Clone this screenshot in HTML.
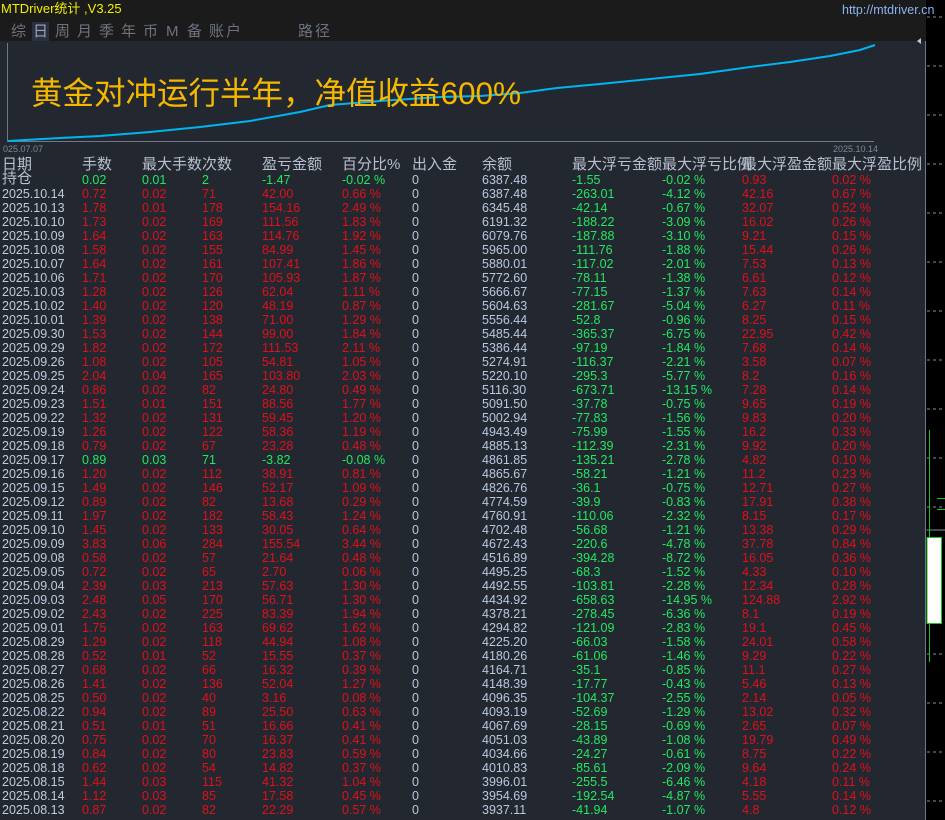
<!DOCTYPE html>
<html style="overflow:hidden;width:945px;height:820px"><head><meta charset="utf-8"><style>
*{margin:0;padding:0;box-sizing:border-box}
body{width:945px;height:820px;overflow:hidden;background:#000;font-family:"Liberation Sans","Noto Sans CJK SC",sans-serif;position:relative}
#top{position:absolute;left:0;top:0;width:926px;height:41px;background:#1b1b1b}
#title{position:absolute;left:1px;top:1px;color:#f0f000;font-size:13px;line-height:16px}
#url{position:absolute;left:842px;top:3px;color:#8ab4f0;font-size:12.5px}
#tabs{position:absolute;left:0;top:22px;color:#6c7380;font-size:15px;line-height:20px}
#tabs span{position:absolute;top:0;white-space:nowrap}
#tabs .on{background:#2a3040;color:#9aa4b8;padding:0 1px;margin-left:-1px}
#panel{position:absolute;left:0;top:41px;width:926px;height:779px;background:#232830;border-right:1px solid #6a7890}
#big{position:absolute;left:31px;top:75px;color:#f5b800;font-size:31.5px;line-height:36px;white-space:nowrap}
.lbl{position:absolute;color:#808896;font-size:9px}
#hdr{position:absolute;top:156px;left:0;color:#b8c0d0;font-size:15px;line-height:18px;white-space:nowrap}
.row{position:absolute;left:0;height:14px;font-size:12.5px;line-height:14px;white-space:nowrap;color:#e0101a}
.row span,#hdr span{position:absolute;top:0}
.c0{left:2px;color:#c0cbe0}.c1{left:82px}.c2{left:142px}.c3{left:202px}.c4{left:262px}.c5{left:342px}.c6{left:412px;color:#b8c8e0}.c7{left:482px;color:#b8c8e0}.c8{left:572px;color:#20e860}.c9{left:662px;color:#20e860}.c10{left:742px}.c11{left:832px}
.g .c1,.g .c2,.g .c3,.g .c4,.g .c5,.g .c10,.g .c11{color:#20e860}
#hdr span{color:#b8c0d0}
</style></head><body>
<div id="top"><div id="title">MTDriver统计 ,V3.25</div>
<div id="tabs"><span style="left:11px">综</span><span class="on" style="left:33px">日</span><span style="left:55px">周</span><span style="left:77px">月</span><span style="left:99px">季</span><span style="left:121px">年</span><span style="left:143px">币</span><span style="left:166px">M</span><span style="left:187px">备</span><span style="left:209px;letter-spacing:2px">账户</span><span style="left:298px;letter-spacing:2px">路径</span></div>
<div id="url">http://mtdriver.cn</div></div>
<div id="panel"></div>
<svg style="position:absolute;left:0;top:0" width="945" height="820">
<line x1="7.5" y1="43" x2="7.5" y2="142" stroke="#707888"/>
<line x1="7" y1="141.5" x2="874" y2="141.5" stroke="#707888"/>
<polyline fill="none" stroke="#00b4f0" stroke-width="2" points="8,141 60,138 100,136 150,132 200,127 250,121 300,112 330,105 380,101 440,97 480,96 520,93 557,88 600,84 660,78 700,74 750,67 790,62 830,56 860,50 875,45"/>
<polygon points="917,41 921,38 921,44" fill="#c0c8d0"/>
<g stroke="#8090a0" stroke-dasharray="3,3"><line x1="927" y1="17" x2="945" y2="17"/><line x1="927" y1="66" x2="945" y2="66"/><line x1="927" y1="115" x2="945" y2="115"/><line x1="927" y1="164" x2="945" y2="164"/><line x1="927" y1="213" x2="945" y2="213"/><line x1="927" y1="262" x2="945" y2="262"/><line x1="927" y1="311" x2="945" y2="311"/><line x1="927" y1="360" x2="945" y2="360"/><line x1="927" y1="409" x2="945" y2="409"/><line x1="927" y1="458" x2="945" y2="458"/><line x1="927" y1="507" x2="945" y2="507"/><line x1="927" y1="605" x2="945" y2="605"/><line x1="927" y1="654" x2="945" y2="654"/><line x1="927" y1="703" x2="945" y2="703"/><line x1="927" y1="752" x2="945" y2="752"/><line x1="927" y1="801" x2="945" y2="801"/></g>
<line x1="926.5" y1="530" x2="945" y2="530" stroke="#8090a0"/>
<line x1="929.5" y1="430" x2="929.5" y2="662" stroke="#20c020"/>
<line x1="937" y1="498.5" x2="945" y2="498.5" stroke="#20c020"/><line x1="937" y1="509.5" x2="945" y2="509.5" stroke="#20c020"/>
<rect x="927" y="537.5" width="14.5" height="86" fill="#fff" stroke="#20c020"/>
</svg>
<div class="lbl" style="left:3px;top:144px">025.07.07</div>
<div class="lbl" style="left:833px;top:144px">2025.10.14</div>
<div id="big">黄金对冲运行半年，净值收益600%</div>
<div id="hdr"><span class="c0">日期</span><span class="c1">手数</span><span class="c2">最大手数次数</span><span class="c4">盈亏金额</span><span class="c5">百分比%</span><span class="c6">出入金</span><span class="c7">余额</span><span class="c8">最大浮亏金额</span><span class="c9">最大浮亏比例</span><span class="c10">最大浮盈金额</span><span class="c11">最大浮盈比例</span></div>
<div id="hdr" style="top:170px"><span class="c0">持仓</span></div>
<div class="row g" style="top:173px"><span class="c1">0.02</span><span class="c2">0.01</span><span class="c3">2</span><span class="c4">-1.47</span><span class="c5">-0.02 %</span><span class="c6">0</span><span class="c7">6387.48</span><span class="c8">-1.55</span><span class="c9">-0.02 %</span><span class="c10" style="color:#e0101a">0.93</span><span class="c11" style="color:#e0101a">0.02 %</span></div>
<div class="row" style="top:187px"><span class="c0">2025.10.14</span><span class="c1">0.72</span><span class="c2">0.02</span><span class="c3">71</span><span class="c4">42.00</span><span class="c5">0.66 %</span><span class="c6">0</span><span class="c7">6387.48</span><span class="c8">-263.01</span><span class="c9">-4.12 %</span><span class="c10">42.16</span><span class="c11">0.67 %</span></div>
<div class="row" style="top:201px"><span class="c0">2025.10.13</span><span class="c1">1.78</span><span class="c2">0.01</span><span class="c3">178</span><span class="c4">154.16</span><span class="c5">2.49 %</span><span class="c6">0</span><span class="c7">6345.48</span><span class="c8">-42.14</span><span class="c9">-0.67 %</span><span class="c10">32.07</span><span class="c11">0.52 %</span></div>
<div class="row" style="top:215px"><span class="c0">2025.10.10</span><span class="c1">1.73</span><span class="c2">0.02</span><span class="c3">169</span><span class="c4">111.56</span><span class="c5">1.83 %</span><span class="c6">0</span><span class="c7">6191.32</span><span class="c8">-188.22</span><span class="c9">-3.09 %</span><span class="c10">16.02</span><span class="c11">0.26 %</span></div>
<div class="row" style="top:229px"><span class="c0">2025.10.09</span><span class="c1">1.64</span><span class="c2">0.02</span><span class="c3">163</span><span class="c4">114.76</span><span class="c5">1.92 %</span><span class="c6">0</span><span class="c7">6079.76</span><span class="c8">-187.88</span><span class="c9">-3.10 %</span><span class="c10">9.21</span><span class="c11">0.15 %</span></div>
<div class="row" style="top:243px"><span class="c0">2025.10.08</span><span class="c1">1.58</span><span class="c2">0.02</span><span class="c3">155</span><span class="c4">84.99</span><span class="c5">1.45 %</span><span class="c6">0</span><span class="c7">5965.00</span><span class="c8">-111.76</span><span class="c9">-1.88 %</span><span class="c10">15.44</span><span class="c11">0.26 %</span></div>
<div class="row" style="top:257px"><span class="c0">2025.10.07</span><span class="c1">1.64</span><span class="c2">0.02</span><span class="c3">161</span><span class="c4">107.41</span><span class="c5">1.86 %</span><span class="c6">0</span><span class="c7">5880.01</span><span class="c8">-117.02</span><span class="c9">-2.01 %</span><span class="c10">7.53</span><span class="c11">0.13 %</span></div>
<div class="row" style="top:271px"><span class="c0">2025.10.06</span><span class="c1">1.71</span><span class="c2">0.02</span><span class="c3">170</span><span class="c4">105.93</span><span class="c5">1.87 %</span><span class="c6">0</span><span class="c7">5772.60</span><span class="c8">-78.11</span><span class="c9">-1.38 %</span><span class="c10">6.61</span><span class="c11">0.12 %</span></div>
<div class="row" style="top:285px"><span class="c0">2025.10.03</span><span class="c1">1.28</span><span class="c2">0.02</span><span class="c3">126</span><span class="c4">62.04</span><span class="c5">1.11 %</span><span class="c6">0</span><span class="c7">5666.67</span><span class="c8">-77.15</span><span class="c9">-1.37 %</span><span class="c10">7.63</span><span class="c11">0.14 %</span></div>
<div class="row" style="top:299px"><span class="c0">2025.10.02</span><span class="c1">1.40</span><span class="c2">0.02</span><span class="c3">120</span><span class="c4">48.19</span><span class="c5">0.87 %</span><span class="c6">0</span><span class="c7">5604.63</span><span class="c8">-281.67</span><span class="c9">-5.04 %</span><span class="c10">6.27</span><span class="c11">0.11 %</span></div>
<div class="row" style="top:313px"><span class="c0">2025.10.01</span><span class="c1">1.39</span><span class="c2">0.02</span><span class="c3">138</span><span class="c4">71.00</span><span class="c5">1.29 %</span><span class="c6">0</span><span class="c7">5556.44</span><span class="c8">-52.8</span><span class="c9">-0.96 %</span><span class="c10">8.25</span><span class="c11">0.15 %</span></div>
<div class="row" style="top:327px"><span class="c0">2025.09.30</span><span class="c1">1.53</span><span class="c2">0.02</span><span class="c3">144</span><span class="c4">99.00</span><span class="c5">1.84 %</span><span class="c6">0</span><span class="c7">5485.44</span><span class="c8">-365.37</span><span class="c9">-6.75 %</span><span class="c10">22.95</span><span class="c11">0.42 %</span></div>
<div class="row" style="top:341px"><span class="c0">2025.09.29</span><span class="c1">1.82</span><span class="c2">0.02</span><span class="c3">172</span><span class="c4">111.53</span><span class="c5">2.11 %</span><span class="c6">0</span><span class="c7">5386.44</span><span class="c8">-97.19</span><span class="c9">-1.84 %</span><span class="c10">7.68</span><span class="c11">0.14 %</span></div>
<div class="row" style="top:355px"><span class="c0">2025.09.26</span><span class="c1">1.08</span><span class="c2">0.02</span><span class="c3">105</span><span class="c4">54.81</span><span class="c5">1.05 %</span><span class="c6">0</span><span class="c7">5274.91</span><span class="c8">-116.37</span><span class="c9">-2.21 %</span><span class="c10">3.58</span><span class="c11">0.07 %</span></div>
<div class="row" style="top:369px"><span class="c0">2025.09.25</span><span class="c1">2.04</span><span class="c2">0.04</span><span class="c3">165</span><span class="c4">103.80</span><span class="c5">2.03 %</span><span class="c6">0</span><span class="c7">5220.10</span><span class="c8">-295.3</span><span class="c9">-5.77 %</span><span class="c10">8.2</span><span class="c11">0.16 %</span></div>
<div class="row" style="top:383px"><span class="c0">2025.09.24</span><span class="c1">0.86</span><span class="c2">0.02</span><span class="c3">82</span><span class="c4">24.80</span><span class="c5">0.49 %</span><span class="c6">0</span><span class="c7">5116.30</span><span class="c8">-673.71</span><span class="c9">-13.15 %</span><span class="c10">7.28</span><span class="c11">0.14 %</span></div>
<div class="row" style="top:397px"><span class="c0">2025.09.23</span><span class="c1">1.51</span><span class="c2">0.01</span><span class="c3">151</span><span class="c4">88.56</span><span class="c5">1.77 %</span><span class="c6">0</span><span class="c7">5091.50</span><span class="c8">-37.78</span><span class="c9">-0.75 %</span><span class="c10">9.65</span><span class="c11">0.19 %</span></div>
<div class="row" style="top:411px"><span class="c0">2025.09.22</span><span class="c1">1.32</span><span class="c2">0.02</span><span class="c3">131</span><span class="c4">59.45</span><span class="c5">1.20 %</span><span class="c6">0</span><span class="c7">5002.94</span><span class="c8">-77.83</span><span class="c9">-1.56 %</span><span class="c10">9.83</span><span class="c11">0.20 %</span></div>
<div class="row" style="top:425px"><span class="c0">2025.09.19</span><span class="c1">1.26</span><span class="c2">0.02</span><span class="c3">122</span><span class="c4">58.36</span><span class="c5">1.19 %</span><span class="c6">0</span><span class="c7">4943.49</span><span class="c8">-75.99</span><span class="c9">-1.55 %</span><span class="c10">16.2</span><span class="c11">0.33 %</span></div>
<div class="row" style="top:439px"><span class="c0">2025.09.18</span><span class="c1">0.79</span><span class="c2">0.02</span><span class="c3">67</span><span class="c4">23.28</span><span class="c5">0.48 %</span><span class="c6">0</span><span class="c7">4885.13</span><span class="c8">-112.39</span><span class="c9">-2.31 %</span><span class="c10">9.92</span><span class="c11">0.20 %</span></div>
<div class="row g" style="top:453px"><span class="c0">2025.09.17</span><span class="c1">0.89</span><span class="c2">0.03</span><span class="c3">71</span><span class="c4">-3.82</span><span class="c5">-0.08 %</span><span class="c6">0</span><span class="c7">4861.85</span><span class="c8">-135.21</span><span class="c9">-2.78 %</span><span class="c10" style="color:#e0101a">4.82</span><span class="c11" style="color:#e0101a">0.10 %</span></div>
<div class="row" style="top:467px"><span class="c0">2025.09.16</span><span class="c1">1.20</span><span class="c2">0.02</span><span class="c3">112</span><span class="c4">38.91</span><span class="c5">0.81 %</span><span class="c6">0</span><span class="c7">4865.67</span><span class="c8">-58.21</span><span class="c9">-1.21 %</span><span class="c10">11.2</span><span class="c11">0.23 %</span></div>
<div class="row" style="top:481px"><span class="c0">2025.09.15</span><span class="c1">1.49</span><span class="c2">0.02</span><span class="c3">146</span><span class="c4">52.17</span><span class="c5">1.09 %</span><span class="c6">0</span><span class="c7">4826.76</span><span class="c8">-36.1</span><span class="c9">-0.75 %</span><span class="c10">12.71</span><span class="c11">0.27 %</span></div>
<div class="row" style="top:495px"><span class="c0">2025.09.12</span><span class="c1">0.89</span><span class="c2">0.02</span><span class="c3">82</span><span class="c4">13.68</span><span class="c5">0.29 %</span><span class="c6">0</span><span class="c7">4774.59</span><span class="c8">-39.9</span><span class="c9">-0.83 %</span><span class="c10">17.91</span><span class="c11">0.38 %</span></div>
<div class="row" style="top:509px"><span class="c0">2025.09.11</span><span class="c1">1.97</span><span class="c2">0.02</span><span class="c3">182</span><span class="c4">58.43</span><span class="c5">1.24 %</span><span class="c6">0</span><span class="c7">4760.91</span><span class="c8">-110.06</span><span class="c9">-2.32 %</span><span class="c10">8.15</span><span class="c11">0.17 %</span></div>
<div class="row" style="top:523px"><span class="c0">2025.09.10</span><span class="c1">1.45</span><span class="c2">0.02</span><span class="c3">133</span><span class="c4">30.05</span><span class="c5">0.64 %</span><span class="c6">0</span><span class="c7">4702.48</span><span class="c8">-56.68</span><span class="c9">-1.21 %</span><span class="c10">13.38</span><span class="c11">0.29 %</span></div>
<div class="row" style="top:537px"><span class="c0">2025.09.09</span><span class="c1">3.83</span><span class="c2">0.06</span><span class="c3">284</span><span class="c4">155.54</span><span class="c5">3.44 %</span><span class="c6">0</span><span class="c7">4672.43</span><span class="c8">-220.6</span><span class="c9">-4.78 %</span><span class="c10">37.78</span><span class="c11">0.84 %</span></div>
<div class="row" style="top:551px"><span class="c0">2025.09.08</span><span class="c1">0.58</span><span class="c2">0.02</span><span class="c3">57</span><span class="c4">21.64</span><span class="c5">0.48 %</span><span class="c6">0</span><span class="c7">4516.89</span><span class="c8">-394.28</span><span class="c9">-8.72 %</span><span class="c10">16.05</span><span class="c11">0.36 %</span></div>
<div class="row" style="top:565px"><span class="c0">2025.09.05</span><span class="c1">0.72</span><span class="c2">0.02</span><span class="c3">65</span><span class="c4">2.70</span><span class="c5">0.06 %</span><span class="c6">0</span><span class="c7">4495.25</span><span class="c8">-68.3</span><span class="c9">-1.52 %</span><span class="c10">4.33</span><span class="c11">0.10 %</span></div>
<div class="row" style="top:579px"><span class="c0">2025.09.04</span><span class="c1">2.39</span><span class="c2">0.03</span><span class="c3">213</span><span class="c4">57.63</span><span class="c5">1.30 %</span><span class="c6">0</span><span class="c7">4492.55</span><span class="c8">-103.81</span><span class="c9">-2.28 %</span><span class="c10">12.34</span><span class="c11">0.28 %</span></div>
<div class="row" style="top:593px"><span class="c0">2025.09.03</span><span class="c1">2.48</span><span class="c2">0.05</span><span class="c3">170</span><span class="c4">56.71</span><span class="c5">1.30 %</span><span class="c6">0</span><span class="c7">4434.92</span><span class="c8">-658.63</span><span class="c9">-14.95 %</span><span class="c10">124.88</span><span class="c11">2.92 %</span></div>
<div class="row" style="top:607px"><span class="c0">2025.09.02</span><span class="c1">2.43</span><span class="c2">0.02</span><span class="c3">225</span><span class="c4">83.39</span><span class="c5">1.94 %</span><span class="c6">0</span><span class="c7">4378.21</span><span class="c8">-278.45</span><span class="c9">-6.36 %</span><span class="c10">8.1</span><span class="c11">0.19 %</span></div>
<div class="row" style="top:621px"><span class="c0">2025.09.01</span><span class="c1">1.75</span><span class="c2">0.02</span><span class="c3">163</span><span class="c4">69.62</span><span class="c5">1.62 %</span><span class="c6">0</span><span class="c7">4294.82</span><span class="c8">-121.09</span><span class="c9">-2.83 %</span><span class="c10">19.1</span><span class="c11">0.45 %</span></div>
<div class="row" style="top:635px"><span class="c0">2025.08.29</span><span class="c1">1.29</span><span class="c2">0.02</span><span class="c3">118</span><span class="c4">44.94</span><span class="c5">1.08 %</span><span class="c6">0</span><span class="c7">4225.20</span><span class="c8">-66.03</span><span class="c9">-1.58 %</span><span class="c10">24.01</span><span class="c11">0.58 %</span></div>
<div class="row" style="top:649px"><span class="c0">2025.08.28</span><span class="c1">0.52</span><span class="c2">0.01</span><span class="c3">52</span><span class="c4">15.55</span><span class="c5">0.37 %</span><span class="c6">0</span><span class="c7">4180.26</span><span class="c8">-61.06</span><span class="c9">-1.46 %</span><span class="c10">9.29</span><span class="c11">0.22 %</span></div>
<div class="row" style="top:663px"><span class="c0">2025.08.27</span><span class="c1">0.68</span><span class="c2">0.02</span><span class="c3">66</span><span class="c4">16.32</span><span class="c5">0.39 %</span><span class="c6">0</span><span class="c7">4164.71</span><span class="c8">-35.1</span><span class="c9">-0.85 %</span><span class="c10">11.1</span><span class="c11">0.27 %</span></div>
<div class="row" style="top:677px"><span class="c0">2025.08.26</span><span class="c1">1.41</span><span class="c2">0.02</span><span class="c3">136</span><span class="c4">52.04</span><span class="c5">1.27 %</span><span class="c6">0</span><span class="c7">4148.39</span><span class="c8">-17.77</span><span class="c9">-0.43 %</span><span class="c10">5.46</span><span class="c11">0.13 %</span></div>
<div class="row" style="top:691px"><span class="c0">2025.08.25</span><span class="c1">0.50</span><span class="c2">0.02</span><span class="c3">40</span><span class="c4">3.16</span><span class="c5">0.08 %</span><span class="c6">0</span><span class="c7">4096.35</span><span class="c8">-104.37</span><span class="c9">-2.55 %</span><span class="c10">2.14</span><span class="c11">0.05 %</span></div>
<div class="row" style="top:705px"><span class="c0">2025.08.22</span><span class="c1">0.94</span><span class="c2">0.02</span><span class="c3">89</span><span class="c4">25.50</span><span class="c5">0.63 %</span><span class="c6">0</span><span class="c7">4093.19</span><span class="c8">-52.69</span><span class="c9">-1.29 %</span><span class="c10">13.02</span><span class="c11">0.32 %</span></div>
<div class="row" style="top:719px"><span class="c0">2025.08.21</span><span class="c1">0.51</span><span class="c2">0.01</span><span class="c3">51</span><span class="c4">16.66</span><span class="c5">0.41 %</span><span class="c6">0</span><span class="c7">4067.69</span><span class="c8">-28.15</span><span class="c9">-0.69 %</span><span class="c10">2.65</span><span class="c11">0.07 %</span></div>
<div class="row" style="top:733px"><span class="c0">2025.08.20</span><span class="c1">0.75</span><span class="c2">0.02</span><span class="c3">70</span><span class="c4">16.37</span><span class="c5">0.41 %</span><span class="c6">0</span><span class="c7">4051.03</span><span class="c8">-43.89</span><span class="c9">-1.08 %</span><span class="c10">19.79</span><span class="c11">0.49 %</span></div>
<div class="row" style="top:747px"><span class="c0">2025.08.19</span><span class="c1">0.84</span><span class="c2">0.02</span><span class="c3">80</span><span class="c4">23.83</span><span class="c5">0.59 %</span><span class="c6">0</span><span class="c7">4034.66</span><span class="c8">-24.27</span><span class="c9">-0.61 %</span><span class="c10">8.75</span><span class="c11">0.22 %</span></div>
<div class="row" style="top:761px"><span class="c0">2025.08.18</span><span class="c1">0.62</span><span class="c2">0.02</span><span class="c3">54</span><span class="c4">14.82</span><span class="c5">0.37 %</span><span class="c6">0</span><span class="c7">4010.83</span><span class="c8">-85.61</span><span class="c9">-2.09 %</span><span class="c10">9.64</span><span class="c11">0.24 %</span></div>
<div class="row" style="top:775px"><span class="c0">2025.08.15</span><span class="c1">1.44</span><span class="c2">0.03</span><span class="c3">115</span><span class="c4">41.32</span><span class="c5">1.04 %</span><span class="c6">0</span><span class="c7">3996.01</span><span class="c8">-255.5</span><span class="c9">-6.46 %</span><span class="c10">4.18</span><span class="c11">0.11 %</span></div>
<div class="row" style="top:789px"><span class="c0">2025.08.14</span><span class="c1">1.12</span><span class="c2">0.03</span><span class="c3">85</span><span class="c4">17.58</span><span class="c5">0.45 %</span><span class="c6">0</span><span class="c7">3954.69</span><span class="c8">-192.54</span><span class="c9">-4.87 %</span><span class="c10">5.55</span><span class="c11">0.14 %</span></div>
<div class="row" style="top:803px"><span class="c0">2025.08.13</span><span class="c1">0.87</span><span class="c2">0.02</span><span class="c3">82</span><span class="c4">22.29</span><span class="c5">0.57 %</span><span class="c6">0</span><span class="c7">3937.11</span><span class="c8">-41.94</span><span class="c9">-1.07 %</span><span class="c10">4.8</span><span class="c11">0.12 %</span></div>
<div class="row" style="top:817px;height:3px;overflow:hidden"><span class="c0">2025.08.12</span><span class="c1">2.01</span><span class="c2">0.02</span><span class="c3">215</span><span class="c4">103.89</span><span class="c5">2.69 %</span><span class="c6">0</span><span class="c7">3914.82</span><span class="c8">-32.11</span><span class="c9">-0.82 %</span><span class="c10">10.71</span><span class="c11">0.24 %</span></div>
</body></html>
